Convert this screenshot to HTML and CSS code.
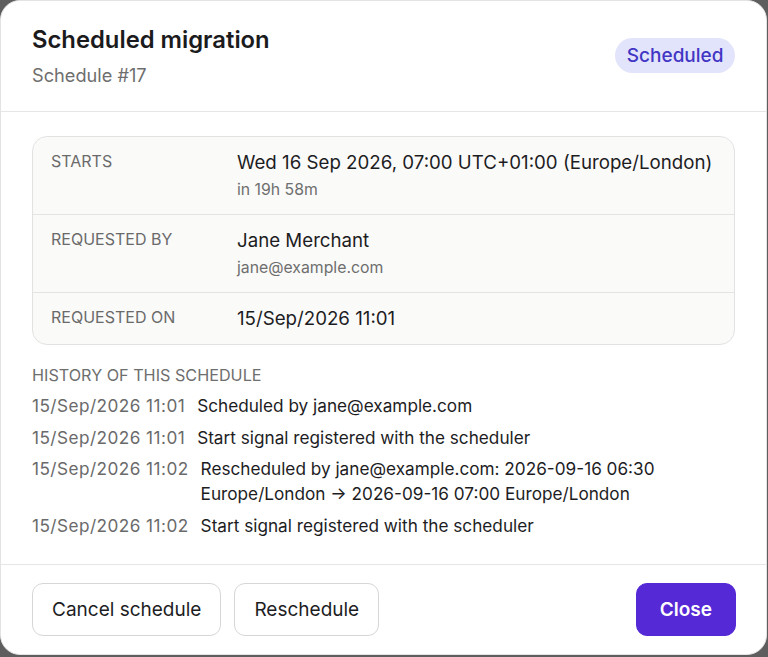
FILE: index.html
```html
<!DOCTYPE html>
<html lang="en">
<head>
<meta charset="utf-8">
<title>Scheduled migration</title>
<link rel="stylesheet" href="styles.css">
</head>
<body>
<div class="dialog">
  <header class="head">
    <div class="head-text">
      <h1 class="title">Scheduled migration</h1>
      <div class="subtitle">Schedule #17</div>
    </div>
    <span class="badge">Scheduled</span>
  </header>
  <main class="content">
    <div class="card">
      <div class="row">
        <div class="label">STARTS</div>
        <div class="val">
          <div class="main">Wed 16 Sep 2026, 07:00 UTC+01:00 (Europe/London)</div>
          <div class="sub">in 19h 58m</div>
        </div>
      </div>
      <div class="row">
        <div class="label">REQUESTED BY</div>
        <div class="val">
          <div class="main">Jane Merchant</div>
          <div class="sub">jane@example.com</div>
        </div>
      </div>
      <div class="row">
        <div class="label">REQUESTED ON</div>
        <div class="val">
          <div class="main">15/Sep/2026 11:01</div>
        </div>
      </div>
    </div>
    <div class="hist-title">HISTORY OF THIS SCHEDULE</div>
    <ul class="hist">
      <li><span class="time">15/Sep/2026 11:01</span><span class="msg">Scheduled by jane@example.com</span></li>
      <li><span class="time">15/Sep/2026 11:01</span><span class="msg">Start signal registered with the scheduler</span></li>
      <li><span class="time">15/Sep/2026 11:02</span><span class="msg">Rescheduled by jane@example.com: 2026-09-16 06:30 Europe/London → 2026-09-16 07:00 Europe/London</span></li>
      <li><span class="time">15/Sep/2026 11:02</span><span class="msg">Start signal registered with the scheduler</span></li>
    </ul>
  </main>
  <footer class="foot">
    <div class="left">
      <button class="btn">Cancel schedule</button>
      <button class="btn">Reschedule</button>
    </div>
    <button class="btn primary">Close</button>
  </footer>
</div>
</body>
</html>
```
FILE: styles.css
```css
* { box-sizing: border-box; }
html, body { margin: 0; padding: 0; }
body {
  background: #5e5e5e;
  font-family: Inter, "Noto Sans", sans-serif;
  color: #1d1d1f;
  width: 768px;
  height: 657px;
  overflow: hidden;
}
.dialog {
  width: 767px;
  height: 655px;
  background: #fff;
  border: 1px solid #e3e3e3;
  border-radius: 20px;
  display: flex;
  flex-direction: column;
  overflow: hidden;
}
.head {
  display: flex;
  align-items: center;
  justify-content: space-between;
  padding: 22px 31px 23px 31px;
  border-bottom: 1px solid #e6e6e6;
  height: 111px;
}
.title {
  margin: 0;
  font-size: 23.8px;
  line-height: 30px;
  font-weight: 600;
  color: #1b1b1d;
}
.subtitle {
  margin-top: 8px;
  font-size: 18.2px;
  line-height: 24px;
  color: #6e6e6e;
}
.badge {
  background: #e2e4fc;
  color: #4236c4;
  font-size: 19px;
  line-height: 35px;
  height: 35px;
  padding: 0 11.5px;
  border-radius: 18px;
  font-weight: 500;
}
.content {
  flex: 1;
  padding: 24px 31px 0 31px;
}
.card {
  background: #fafaf9;
  border: 1px solid #e2e2e2;
  border-radius: 15px;
  overflow: hidden;
}
.row {
  display: grid;
  grid-template-columns: 186px 1fr;
  padding: 13px 18px 12px 18px;
}
.row + .row { border-top: 1px solid #e4e4e4; }
.label {
  font-size: 16px;
  line-height: 22px;
  color: #6a6a6a;
}
.main {
  font-size: 18.7px;
  line-height: 26px;
  color: #1d1d1f;
  white-space: nowrap;
}
.sub {
  margin-top: 2px;
  font-size: 15.8px;
  line-height: 24px;
  color: #6e6e6e;
}
.hist-title {
  margin-top: 20px;
  font-size: 16.2px;
  line-height: 20px;
  color: #6e6e6e;
}
.hist {
  list-style: none;
  margin: 8px 0 0 0;
  padding: 0;
  display: flex;
  flex-direction: column;
  gap: 6.7px;
}
.hist li {
  display: flex;
  gap: 12px;
  font-size: 17.2px;
  line-height: 25px;
}
.time { color: #6a6a6a; white-space: nowrap; letter-spacing: 0.45px; }
.msg { color: #1d1d1f; }
.foot {
  border-top: 1px solid #e6e6e6;
  display: flex;
  justify-content: space-between;
  align-items: center;
  padding: 18px 30px 18px 31px;
}
.left { display: flex; gap: 13px; }
.btn {
  font-family: Inter, "Noto Sans", sans-serif;
  height: 53px;
  padding: 0 19px;
  font-size: 19px;
  color: #1d1d1f;
  background: #fff;
  border: 1px solid #d6d6d6;
  border-radius: 11px;
}
.btn.primary {
  background: #5529d6;
  border-color: #5529d6;
  color: #fff;
  font-weight: 600;
  padding: 0 23px;
}
```
